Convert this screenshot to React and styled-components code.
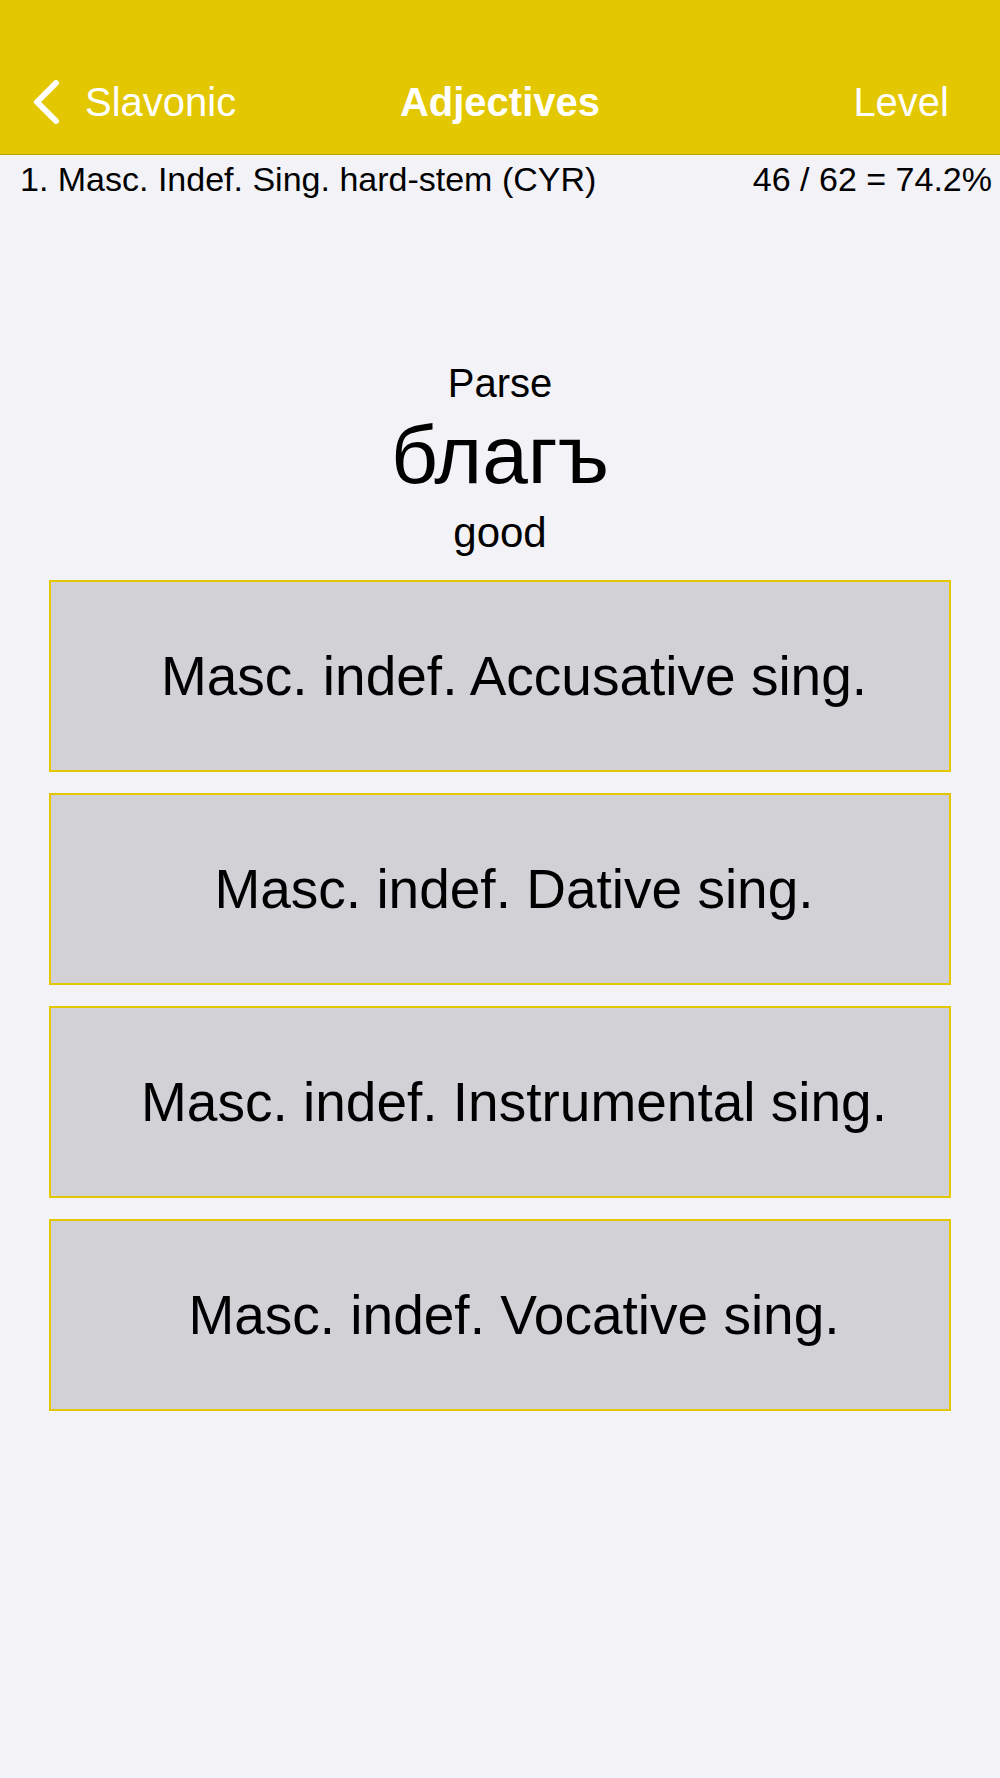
import React from "react";
import styled, { createGlobalStyle } from "styled-components";

const options = [
  "Masc. indef. Accusative sing.",
  "Masc. indef. Dative sing.",
  "Masc. indef. Instrumental sing.",
  "Masc. indef. Vocative sing.",
];

export default function App() {
  return (
    <Page>
      <GlobalStyle />
      <Header>
        <NavBar>
          <BackButton>
            <svg width="28" height="44" viewBox="0 0 28 44" fill="none">
              <path
                d="M24 3 L5 22 L24 41"
                stroke="#fff"
                strokeWidth="6"
                strokeLinecap="round"
                strokeLinejoin="round"
              />
            </svg>
            <span>Slavonic</span>
          </BackButton>
          <Title>Adjectives</Title>
          <NavAction>Level</NavAction>
        </NavBar>
      </Header>
      <InfoRow>
        <span>1. Masc. Indef. Sing. hard-stem (CYR)</span>
        <span>46 / 62 = 74.2%</span>
      </InfoRow>
      <Prompt>
        <Instruction>Parse</Instruction>
        <Word>благъ</Word>
        <Gloss>good</Gloss>
      </Prompt>
      <Choices>
        {options.map((label) => (
          <Choice key={label}>{label}</Choice>
        ))}
      </Choices>
    </Page>
  );
}

const GlobalStyle = createGlobalStyle`
  html, body {
    margin: 0;
    padding: 0;
    background: #f2f2f7;
  }
  body {
    font-family: "Liberation Sans", Arial, sans-serif;
    color: #000;
  }
`;

const Page = styled.div`
  min-height: 1778px;
  background: #f2f2f7;
`;

const Header = styled.header`
  background: #e3c700;
  padding: 78px 0 28px;
  border-bottom: 1px solid rgba(0, 0, 0, 0.18);
`;

const NavBar = styled.nav`
  display: grid;
  grid-template-columns: 1fr auto 1fr;
  align-items: center;
  height: 48px;
  padding: 0 32px;
  color: #fff;
  font-size: 40px;
  line-height: 48px;
`;

const BackButton = styled.div`
  display: flex;
  align-items: center;
  gap: 25px;
  & > svg {
    display: block;
  }
`;

const Title = styled.div`
  font-weight: 700;
  text-align: center;
`;

const NavAction = styled.div`
  text-align: right;
  padding-right: 19px;
`;

const InfoRow = styled.div`
  display: flex;
  justify-content: space-between;
  padding: 4px 8px 0 20px;
  font-size: 34px;
  line-height: 40px;
`;

const Prompt = styled.div`
  display: flex;
  flex-direction: column;
  align-items: center;
  padding-top: 160px;
`;

const Instruction = styled.div`
  font-size: 40px;
  line-height: 48px;
`;

const Word = styled.div`
  font-size: 82px;
  line-height: 96px;
`;

const Gloss = styled.div`
  font-size: 42px;
  line-height: 50px;
  margin-top: 5px;
`;

const Choices = styled.div`
  display: flex;
  flex-direction: column;
  gap: 21px;
  margin: 22px 49px 0;
`;

const Choice = styled.div`
  display: flex;
  align-items: center;
  justify-content: center;
  box-sizing: border-box;
  height: 192px;
  padding-left: 28px;
  background: #d1d1d6;
  border: 2px solid #e3c700;
  font-size: 55px;
  line-height: 64px;
`;
